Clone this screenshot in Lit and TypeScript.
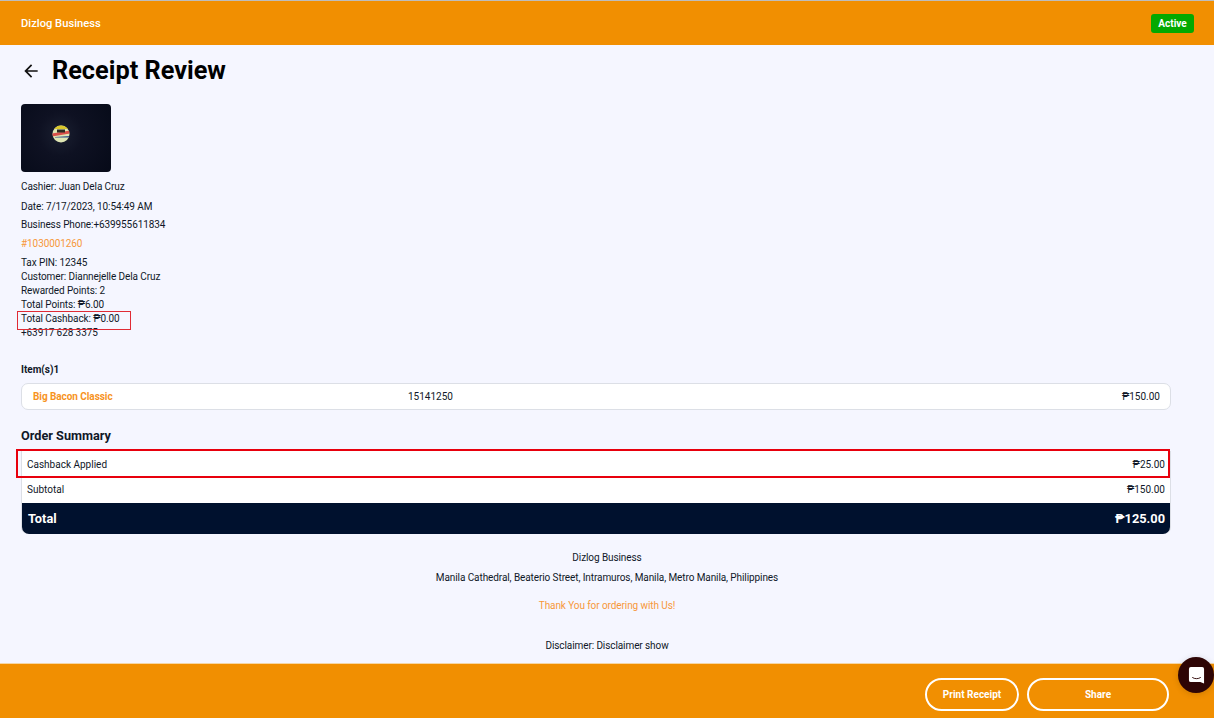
import { LitElement, html, css } from "lit";
import { customElement } from "lit/decorators.js";

@customElement("app-root")
export class AppRoot extends LitElement {
  static styles = css`
    :host { display: flex; flex-direction: column; height: 718px; width: 1214px; overflow: hidden; position: relative; background: #f5f6ff; font-family: Roboto, "Liberation Sans", sans-serif; font-size: 10px; color: #101828; }
    * { box-sizing: border-box; }
    .topbar { height: 45px; flex: none; background: #f18f01; border-top: 1px solid #bdbdbd; display: flex; align-items: center; justify-content: space-between; padding: 0 20px 0 21px; color: #fff; font-size: 11.2px; font-weight: 500; }
    .badge { background: #03a900; border-radius: 3px; height: 19px; width: 43px; display: flex; align-items: center; justify-content: center; font-size: 10px; font-weight: 700; }
    main { flex: 1; padding: 0 43px 0 21px; min-height: 0; }
    .title { display: flex; align-items: center; height: 50px; gap: 11px; padding-top: 2px; }
    .title svg { display: block; }
    h1 { margin: 0; font-size: 25.3px; font-weight: 700; color: #000; line-height: 48px; }
    .logo { width: 90px; height: 68px; margin-top: 9px; border-radius: 4px; padding: 0 10px 8px 0; background: radial-gradient(circle at 44% 44%, #1a1f30 0, #0e1122 35%, #060a18 100%); display: flex; align-items: center; justify-content: center; }
    .info { margin-top: 5px; letter-spacing: -0.09px; }
    .l { height: 19px; line-height: 19px; white-space: nowrap; }
    .l.a { height: 20px; line-height: 19px; }
    .l.b { height: 18px; line-height: 19px; }
    .orange { color: #f7983a; }
    .tight { height: 14px; line-height: 14px; }
    .first { margin-top: 3px; }
    .mark { position: relative; }
    .redbox { position: absolute; left: -4px; top: -1px; width: 114px; height: 19px; border: 1px solid #e02b35; pointer-events: none; }
    .items-h { margin-top: 23px; font-weight: 700; line-height: 14px; }
    .item { margin-top: 6px; height: 27px; background: #fff; border: 1px solid #dcdfe6; border-radius: 7px; display: grid; grid-template-columns: 375px 1fr auto; align-items: center; padding: 0 10px 0 11px; }
    .item b { color: #f7931e; font-weight: 700; letter-spacing: -0.06px; }
    h2 { margin: 19px 0 0; font-size: 12.7px; font-weight: 700; line-height: 14px; color: #101828; }
    .summary { margin-top: 8px; position: relative; width: 1150px; border-radius: 0 0 7px 7px; background: #fff; border-left: 1px solid #dcdfe6; border-right: 1px solid #dcdfe6; }
    .row { height: 26px; display: flex; align-items: center; justify-content: space-between; padding: 0 5px; }
    .row.sub { padding-bottom: 2px; }
    .row.total { height: 31px; background: #00112e; color: #fff; font-size: 12.8px; font-weight: 700; border-radius: 0 0 7px 7px; padding: 0 5px 0 6px; }
    .bigred { position: absolute; left: -6px; top: -2px; width: 1154px; height: 29px; border: 2px solid #e8000d; pointer-events: none; }
    .center { text-align: center; width: 1214px; margin-left: -21px; letter-spacing: -0.09px; line-height: 20px; }
    .c1 { margin-top: 14px; }
    .c3 { margin-top: 8px; }
    .c4 { margin-top: 20px; }
    footer { height: 55px; flex: none; background: #f18f01; display: flex; align-items: flex-start; justify-content: flex-end; gap: 8px; padding: 14px 45px 0 0; border-top: 1px solid #f5d6a6; }
    button { height: 33px; border: 2px solid #fff; border-radius: 17px; background: transparent; color: #fff; font: 700 10px Roboto, sans-serif; padding: 0; }
    .print { width: 94px; }
    .share { width: 142px; }
    .chat { position: absolute; left: 1178px; top: 657px; width: 36px; height: 36px; border-radius: 50%; background: #2e0505; display: flex; align-items: center; justify-content: center; box-shadow: 0 1px 6px rgba(0,0,0,.15); }
  `;

  render() {
    return html`
      <div class="topbar"><span>Dizlog Business</span><span class="badge">Active</span></div>
      <main>
        <div class="title">
          <svg width="20" height="20" viewBox="0 0 24 24" fill="#111"><path d="M20 11H7.83l5.59-5.59L12 4l-8 8 8 8 1.41-1.41L7.83 13H20z"/></svg>
          <h1>Receipt Review</h1>
        </div>
        <div class="logo">
          <svg width="18" height="18" viewBox="0 0 18 18">
            <defs><clipPath id="c"><circle cx="9" cy="9" r="8.5"/></clipPath></defs>
            <g clip-path="url(#c)">
              <rect width="18" height="18" fill="#dfe6b4"/>
              <rect width="18" height="4" fill="#d9c72b"/>
              <path d="M0 8.5 L18 5.5 V8.5 L0 11.5Z" fill="#d9504a"/>
              <rect x="5" y="4.5" width="8" height="3" fill="#2a2a20"/>
              <path d="M3 12.5 H18 V11 L3 12Z" fill="#2c4a86"/>
            </g>
          </svg>
        </div>
        <div class="info">
          <div class="l a">Cashier: Juan Dela Cruz</div>
          <div class="l b">Date: 7/17/2023, 10:54:49 AM</div>
          <div class="l">Business Phone:+639955611834</div>
          <div class="l orange">#1030001260</div>
          <div class="l tight first">Tax PIN: 12345</div>
          <div class="l tight">Customer: Diannejelle Dela Cruz</div>
          <div class="l tight">Rewarded Points: 2</div>
          <div class="l tight">Total Points: ₱6.00</div>
          <div class="l tight mark">Total Cashback: ₱0.00<span class="redbox"></span></div>
          <div class="l tight">+63917 628 3375</div>
        </div>
        <div class="items-h">Item(s)1</div>
        <div class="item"><b>Big Bacon Classic</b><span>15141250</span><span>₱150.00</span></div>
        <h2>Order Summary</h2>
        <div class="summary">
          <div class="row"><span>Cashback Applied</span><span>₱25.00</span></div>
          <div class="row sub"><span>Subtotal</span><span>₱150.00</span></div>
          <div class="row total"><span>Total</span><span>₱125.00</span></div>
          <span class="bigred"></span>
        </div>
        <div class="center c1">Dizlog Business</div>
        <div class="center">Manila Cathedral, Beaterio Street, Intramuros, Manila, Metro Manila, Philippines</div>
        <div class="center c3 orange">Thank You for ordering with Us!</div>
        <div class="center c4">Disclaimer: Disclaimer show</div>
      </main>
      <footer>
        <button class="print">Print Receipt</button>
        <button class="share">Share</button>
      </footer>
      <div class="chat">
        <svg width="17" height="19" viewBox="0 0 18 20"><path d="M3 1h12a2 2 0 0 1 2 2v15.5l-4-1.5H3a2 2 0 0 1-2-2V3a2 2 0 0 1 2-2z" fill="#fff"/><path d="M4.5 12c2.5 1.8 6.5 1.8 9 0" fill="none" stroke="#2e0505" stroke-width="1"/></svg>
      </div>
    `;
  }
}
